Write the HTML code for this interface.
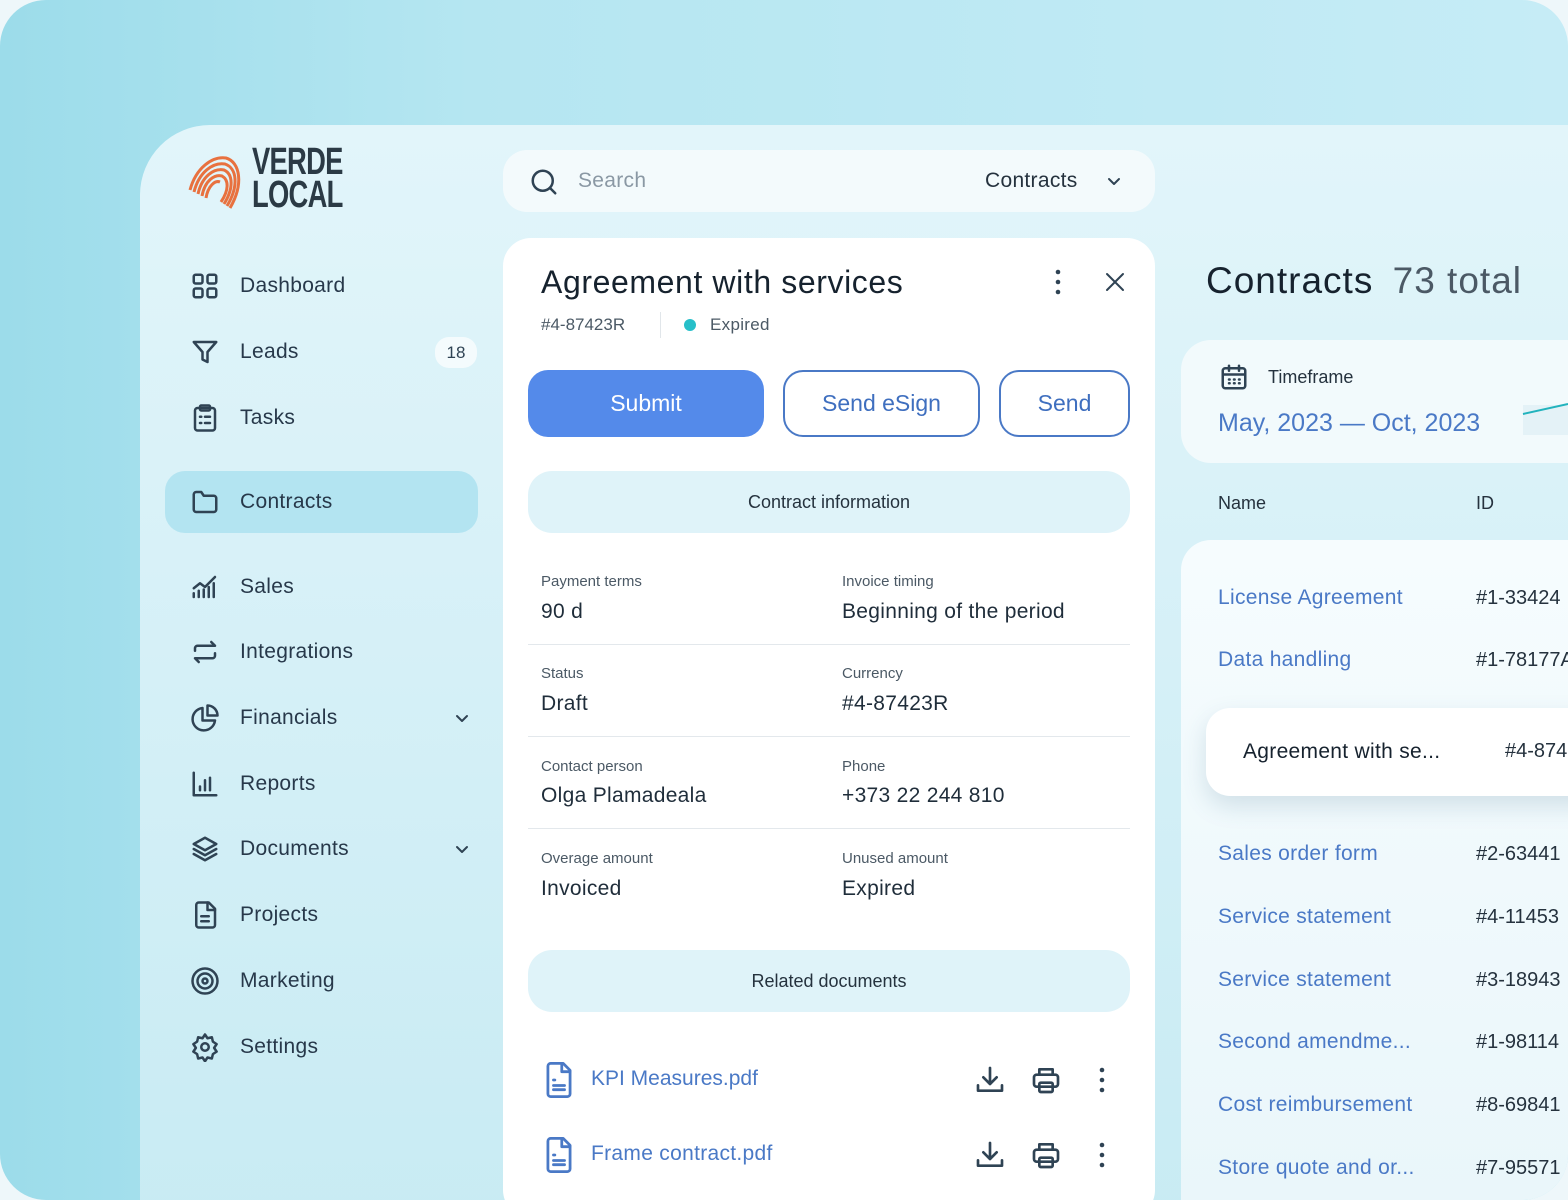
<!DOCTYPE html>
<html><head><meta charset="utf-8"><style>
*{box-sizing:border-box;margin:0;padding:0}
body{width:1568px;height:1200px;overflow:hidden;background:#eef7fa;font-family:"Liberation Sans",sans-serif;color:#1f2d3a;position:relative}
.outer{position:absolute;left:0;top:0;width:1568px;height:1200px;border-radius:46px;background:linear-gradient(90deg,#9cdcea 0%,#b5e6f1 30%,#c6ecf6 100%);overflow:hidden}
.page{position:absolute;left:140px;top:125px;width:1460px;height:1100px;border-radius:70px 0 0 0;background:linear-gradient(180deg,#e2f5fa 0%,#d5f0f7 50%,#c8ebf3 100%)}
.a{position:absolute}
.nav{position:absolute;left:190px;font-size:21px;color:#27384a;display:flex;align-items:center;letter-spacing:.3px}
.nav svg{width:30px;height:30px;margin-right:20px;fill:none;stroke:#2f4354;stroke-width:2;stroke-linecap:round;stroke-linejoin:round}
.card{position:absolute;background:#fff}
.btn{position:absolute;top:370px;height:67px;border-radius:20px;font-size:23px;display:flex;align-items:center;justify-content:center}
.sec{position:absolute;left:528px;width:602px;height:62px;border-radius:24px;background:#dff3f9;font-size:18px;display:flex;align-items:center;justify-content:center;color:#25323e}
.lbl{position:absolute;font-size:15px;color:#4b5965}
.val{position:absolute;font-size:21px;color:#1f2d3a;letter-spacing:.3px}
.hr{position:absolute;left:528px;width:602px;height:1px;background:#e3e8ec}
.lk{position:absolute;left:1218px;font-size:21px;color:#4a79c6;letter-spacing:.3px}
.id{position:absolute;left:1476px;font-size:20px;color:#25323e;white-space:nowrap}
.ic{fill:none;stroke:#2f4354;stroke-width:2;stroke-linecap:round;stroke-linejoin:round}
.icb{fill:none;stroke:#4a79c6;stroke-width:2;stroke-linecap:round;stroke-linejoin:round}
</style></head><body>
<div class="outer">
<div class="page"></div>

<!-- logo -->
<svg class="a" style="left:186px;top:150px" width="62" height="64" viewBox="0 0 62 64">
<g fill="none" stroke="#e8713f" stroke-width="3">
<path d="M4 40 C10 18 26 6 40 8 C54 12 58 34 44 58"/>
<path d="M8 42 C13 22 27 12 39 14 C51 18 53 36 41 56"/>
<path d="M12 44 C16 26 28 18 38 20 C47 24 48 38 38 54"/>
<path d="M16 46 C19 30 29 24 36 26 C43 30 43 40 35 52"/>
<path d="M20 48 C22 36 29 30 34 32"/>
</g></svg>
<div class="a" style="left:252px;top:146px;font-weight:bold;font-size:38px;line-height:33px;color:#2b3a45;letter-spacing:-1px;transform:scaleX(0.72);transform-origin:left">VERDE<br>LOCAL</div>

<!-- nav -->
<div class="nav" style="top:271px"><svg viewBox="0 0 24 24"><rect x="3" y="3" width="7" height="7" rx="1.5"/><rect x="14" y="3" width="7" height="7" rx="1.5"/><rect x="3" y="14" width="7" height="7" rx="1.5"/><rect x="14" y="14" width="7" height="7" rx="1.5"/></svg>Dashboard</div>
<div class="nav" style="top:337px"><svg viewBox="0 0 24 24"><path d="M3 4h18l-7 8v8l-4-2v-6z"/></svg>Leads</div>
<div class="a" style="left:435px;top:337px;width:42px;height:31px;border-radius:14px;background:#f4fbfd;font-size:17px;display:flex;align-items:center;justify-content:center;color:#2f4354">18</div>
<div class="nav" style="top:403px"><svg viewBox="0 0 24 24"><rect x="4" y="4" width="16" height="18" rx="2"/><rect x="8" y="2" width="8" height="4" rx="1"/><path d="M8 11h1M12 11h4M8 16h1M12 16h4"/></svg>Tasks</div>
<div class="a" style="left:165px;top:471px;width:313px;height:62px;border-radius:20px;background:#b3e4f1"></div>
<div class="nav" style="top:487px"><svg viewBox="0 0 24 24"><path d="M3 6a2 2 0 0 1 2-2h4l2 3h8a2 2 0 0 1 2 2v9a2 2 0 0 1-2 2H5a2 2 0 0 1-2-2z"/></svg>Contracts</div>
<div class="nav" style="top:572px"><svg viewBox="0 0 24 24"><path d="M3 20v-3M7 20v-5M11 20v-6M15 20v-8M19 20V9M3 13l5-4 4 3 8-8"/></svg>Sales</div>
<div class="nav" style="top:637px"><svg viewBox="0 0 24 24"><path d="M4 11V9a2 2 0 0 1 2-2h14l-3-3M20 13v2a2 2 0 0 1-2 2H4l3 3"/></svg>Integrations</div>
<div class="nav" style="top:703px"><svg viewBox="0 0 24 24"><path d="M10 4a9 9 0 1 0 10 10H10z"/><path d="M14 2a8 8 0 0 1 8 8h-8z"/></svg>Financials</div>
<svg class="a ic" style="left:454px;top:710px" width="16" height="16" viewBox="0 0 16 16"><path d="M3 6l5 5 5-5"/></svg>
<div class="nav" style="top:769px"><svg viewBox="0 0 24 24"><path d="M3 3v18h18M8 17v-3M12 17V9M16 17V7"/></svg>Reports</div>
<div class="nav" style="top:834px"><svg viewBox="0 0 24 24"><path d="M12 3l9 5-9 5-9-5z"/><path d="M3 12l9 5 9-5M3 16l9 5 9-5"/></svg>Documents</div>
<svg class="a ic" style="left:454px;top:841px" width="16" height="16" viewBox="0 0 16 16"><path d="M3 6l5 5 5-5"/></svg>
<div class="nav" style="top:900px"><svg viewBox="0 0 24 24"><path d="M5 4a2 2 0 0 1 2-2h8l5 5v13a2 2 0 0 1-2 2H7a2 2 0 0 1-2-2z"/><path d="M14 2v6h6M9 13h6M9 17h6"/></svg>Projects</div>
<div class="nav" style="top:966px"><svg viewBox="0 0 24 24"><circle cx="12" cy="12" r="10"/><circle cx="12" cy="12" r="6"/><circle cx="12" cy="12" r="2"/></svg>Marketing</div>
<div class="nav" style="top:1032px"><svg viewBox="0 0 24 24"><circle cx="12" cy="12" r="3"/><path d="M12 2l2 3 3.5-.8.8 3.5 3 2-2 3 2 3-3 2-.8 3.5-3.5-.8-2 3-2-3-3.5.8-.8-3.5-3-2 2-3-2-3 3-2 .8-3.5 3.5.8z"/></svg>Settings</div>

<!-- search -->
<div class="card" style="left:503px;top:150px;width:652px;height:62px;border-radius:24px;background:#f3fafc"></div>
<svg class="a ic" style="left:529px;top:167px" width="30" height="30" viewBox="0 0 24 24"><circle cx="11" cy="11" r="8"/><path d="M17 17l4 4"/></svg>
<div class="a" style="left:578px;top:169px;font-size:21px;color:#8a98a4;letter-spacing:.3px">Search</div>
<div class="a" style="left:985px;top:169px;font-size:21px;color:#25323e;letter-spacing:.3px">Contracts</div>
<svg class="a ic" style="left:1106px;top:173px" width="16" height="16" viewBox="0 0 16 16"><path d="M3 6l5 5 5-5"/></svg>

<!-- detail card -->
<div class="card" style="left:503px;top:238px;width:652px;height:980px;border-radius:28px"></div>
<div class="a" style="left:541px;top:264px;font-size:32px;color:#16222e;letter-spacing:.6px">Agreement with services</div>
<svg class="a" style="left:1050px;top:268px" width="16" height="28" viewBox="0 0 16 28"><circle cx="8" cy="4" r="2.3" fill="#2f4354"/><circle cx="8" cy="14" r="2.3" fill="#2f4354"/><circle cx="8" cy="24" r="2.3" fill="#2f4354"/></svg>
<svg class="a ic" style="left:1103px;top:270px" width="24" height="24" viewBox="0 0 24 24"><path d="M4 4l16 16M20 4L4 20"/></svg>
<div class="a" style="left:541px;top:315px;font-size:17px;color:#4b5965">#4-87423R</div>
<div class="a" style="left:660px;top:312px;width:1px;height:26px;background:#e1e6ea"></div>
<div class="a" style="left:684px;top:319px;width:12px;height:12px;border-radius:50%;background:#27bfc9"></div>
<div class="a" style="left:710px;top:315px;font-size:17px;color:#4b5965;letter-spacing:.3px">Expired</div>

<div class="btn" style="left:528px;width:236px;background:#548aea;color:#fff">Submit</div>
<div class="btn" style="left:783px;width:197px;border:2px solid #4a79c6;color:#3f6fbf">Send eSign</div>
<div class="btn" style="left:999px;width:131px;border:2px solid #4a79c6;color:#3f6fbf">Send</div>

<div class="sec" style="top:471px">Contract information</div>
<div class="lbl" style="left:541px;top:573px">Payment terms</div><div class="val" style="left:541px;top:600px">90 d</div>
<div class="lbl" style="left:842px;top:573px">Invoice timing</div><div class="val" style="left:842px;top:600px">Beginning of the period</div>
<div class="hr" style="top:644px"></div>
<div class="lbl" style="left:541px;top:665px">Status</div><div class="val" style="left:541px;top:692px">Draft</div>
<div class="lbl" style="left:842px;top:665px">Currency</div><div class="val" style="left:842px;top:692px">#4-87423R</div>
<div class="hr" style="top:736px"></div>
<div class="lbl" style="left:541px;top:758px">Contact person</div><div class="val" style="left:541px;top:784px">Olga Plamadeala</div>
<div class="lbl" style="left:842px;top:758px">Phone</div><div class="val" style="left:842px;top:784px">+373 22 244 810</div>
<div class="hr" style="top:828px"></div>
<div class="lbl" style="left:541px;top:850px">Overage amount</div><div class="val" style="left:541px;top:877px">Invoiced</div>
<div class="lbl" style="left:842px;top:850px">Unused amount</div><div class="val" style="left:842px;top:877px">Expired</div>

<div class="sec" style="top:950px">Related documents</div>

<svg class="a icb" style="left:542px;top:1062px" width="34" height="36" viewBox="0 0 24 26"><path d="M4 3a2 2 0 0 1 2-2h9l5 5v17a2 2 0 0 1-2 2H6a2 2 0 0 1-2-2z"/><path d="M14 1v6h6M8 13h1M8 17h8M8 20h8"/></svg>
<div class="a" style="left:591px;top:1067px;font-size:21px;color:#4a79c6">KPI Measures.pdf</div>
<svg class="a icb" style="left:542px;top:1137px" width="34" height="36" viewBox="0 0 24 26"><path d="M4 3a2 2 0 0 1 2-2h9l5 5v17a2 2 0 0 1-2 2H6a2 2 0 0 1-2-2z"/><path d="M14 1v6h6M8 13h1M8 17h8M8 20h8"/></svg>
<div class="a" style="left:591px;top:1142px;font-size:21px;color:#4a79c6;letter-spacing:.3px">Frame contract.pdf</div>

<svg class="a ic" style="left:974px;top:1064px" width="32" height="32" viewBox="0 0 24 24"><path d="M12 3v12M7 10l5 5 5-5M3 16v4h18v-4"/></svg>
<svg class="a ic" style="left:1030px;top:1064px" width="32" height="32" viewBox="0 0 24 24"><path d="M7 8V4h10v4"/><rect x="3" y="8" width="18" height="9" rx="2"/><rect x="7" y="14" width="10" height="7" rx="1"/></svg>
<svg class="a" style="left:1094px;top:1066px" width="16" height="28" viewBox="0 0 16 28"><circle cx="8" cy="4" r="2.3" fill="#2f4354"/><circle cx="8" cy="14" r="2.3" fill="#2f4354"/><circle cx="8" cy="24" r="2.3" fill="#2f4354"/></svg>
<svg class="a ic" style="left:974px;top:1139px" width="32" height="32" viewBox="0 0 24 24"><path d="M12 3v12M7 10l5 5 5-5M3 16v4h18v-4"/></svg>
<svg class="a ic" style="left:1030px;top:1139px" width="32" height="32" viewBox="0 0 24 24"><path d="M7 8V4h10v4"/><rect x="3" y="8" width="18" height="9" rx="2"/><rect x="7" y="14" width="10" height="7" rx="1"/></svg>
<svg class="a" style="left:1094px;top:1141px" width="16" height="28" viewBox="0 0 16 28"><circle cx="8" cy="4" r="2.3" fill="#2f4354"/><circle cx="8" cy="14" r="2.3" fill="#2f4354"/><circle cx="8" cy="24" r="2.3" fill="#2f4354"/></svg>

<!-- right column -->
<div class="a" style="left:1206px;top:260px;font-size:37px;color:#16222e;white-space:nowrap;letter-spacing:1px">Contracts <span style="color:#4b5965;margin-left:8px">73 total</span></div>
<div class="card" style="left:1181px;top:340px;width:420px;height:123px;border-radius:30px;background:#f2fafc"></div>
<svg class="a ic" style="left:1219px;top:362px" width="30" height="30" viewBox="0 0 24 24"><rect x="3" y="5" width="18" height="16" rx="2"/><path d="M3 10h18M8 3v4M16 3v4M8 14h.5M12 14h.5M16 14h.5M8 17h.5M12 17h.5M16 17h.5"/></svg>
<div class="a" style="left:1268px;top:367px;font-size:18px;color:#25323e">Timeframe</div>
<div class="a" style="left:1218px;top:409px;font-size:25px;color:#4a79c6;white-space:nowrap">May, 2023 — Oct, 2023</div>
<div class="a" style="left:1523px;top:405px;width:45px;height:30px;background:#e4f2f7"></div>
<svg class="a" style="left:1520px;top:400px" width="48" height="20"><path d="M3 14 L48 4" stroke="#22b3bd" stroke-width="2"/></svg>
<div class="a" style="left:1218px;top:493px;font-size:18px;color:#25323e">Name</div>
<div class="a" style="left:1476px;top:493px;font-size:18px;color:#25323e">ID</div>
<div class="card" style="left:1181px;top:540px;width:420px;height:700px;border-radius:30px;background:linear-gradient(180deg,#f6fcfe,#e9f6fa)"></div>
<div class="lk" style="top:586px">License Agreement</div><div class="id" style="top:587px">#1-33424</div>
<div class="lk" style="top:648px">Data handling</div><div class="id" style="top:649px">#1-78177A</div>
<div class="card" style="left:1206px;top:708px;width:400px;height:88px;border-radius:24px;box-shadow:0 10px 24px rgba(60,110,140,.18)"></div>
<div class="a" style="left:1243px;top:740px;font-size:21px;color:#16222e;letter-spacing:.3px">Agreement with se...</div>
<div class="id" style="left:1505px;top:740px">#4-874</div>
<div class="lk" style="top:842px">Sales order form</div><div class="id" style="top:843px">#2-63441</div>
<div class="lk" style="top:905px">Service statement</div><div class="id" style="top:906px">#4-11453</div>
<div class="lk" style="top:968px">Service statement</div><div class="id" style="top:969px">#3-18943</div>
<div class="lk" style="top:1030px">Second amendme...</div><div class="id" style="top:1031px">#1-98114</div>
<div class="lk" style="top:1093px">Cost reimbursement</div><div class="id" style="top:1094px">#8-69841</div>
<div class="lk" style="top:1156px">Store quote and or...</div><div class="id" style="top:1157px">#7-95571</div>
</div>
</body></html>
